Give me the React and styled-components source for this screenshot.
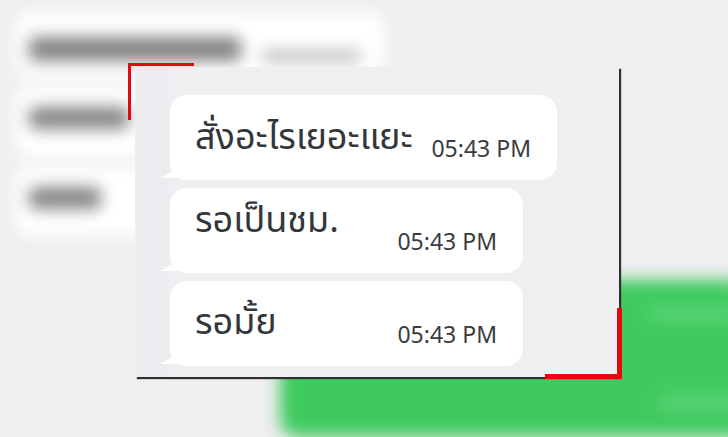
import styled, { createGlobalStyle } from 'styled-components';

const GlobalStyle = createGlobalStyle`
  html, body {
    margin: 0;
    padding: 0;
    background: #efeef0;
  }
  body {
    font-family: "Noto Sans Thai", "Noto Sans", "DejaVu Sans", sans-serif;
  }
`;

const Stage = styled.div`
  position: relative;
  width: 728px;
  height: 437px;
  overflow: hidden;
  background: #efeef0;
`;

/* blurred chat behind the zoomed panel */
const Backdrop = styled.div`
  display: flex;
  flex-direction: column;
  gap: 10px;
  padding: 12px 0 0 15px;
  height: 100%;
  box-sizing: border-box;
  filter: blur(8px);
`;

const GhostBubble = styled.div`
  display: flex;
  align-items: ${(p) => (p.$low ? 'flex-end' : 'center')};
  gap: 20px;
  width: ${(p) => p.$w}px;
  height: ${(p) => p.$h}px;
  padding: 0 14px 16px;
  box-sizing: border-box;
  background: #ffffff;
  border-radius: 14px;
`;

const GhostText = styled.div`
  width: ${(p) => p.$w}px;
  height: ${(p) => p.$h}px;
  margin-top: ${(p) => p.$top || 0}px;
  background: ${(p) => p.$c || '#858588'};
  border-radius: 6px;
`;

const GreenBubble = styled.div`
  align-self: flex-end;
  margin-top: 34px;
  margin-right: -20px;
  width: 468px;
  height: 180px;
  background: #3fca5f;
  border-radius: 18px;
  display: flex;
  flex-direction: column;
  align-items: flex-end;
  gap: 76px;
  padding: 26px 10px 0 0;
  box-sizing: border-box;
`;

const GreenStreak = styled.div`
  width: ${(p) => p.$w}px;
  height: 14px;
  background: #5cd477;
  border-radius: 7px;
`;

/* zoomed panel */
const Panel = styled.div`
  position: absolute;
  left: 135px;
  top: 67px;
  width: 484px;
  height: 310px;
  box-sizing: border-box;
  padding: 28px 0 0 35px;
  background: #efeef0;
  box-shadow: 2px 2px 1px #2f2f30;
  display: flex;
  flex-direction: column;
  gap: 8px;
  background-image: linear-gradient(90deg, #efeef0 0, #e9ecef 28px, #efeef0 36px);
`;

const Bubble = styled.div`
  position: relative;
  display: flex;
  align-items: flex-start;
  width: ${(p) => p.$w}px;
  height: 85px;
  box-sizing: border-box;
  padding: 0 26px 0 25px;
  background: #ffffff;
  border-radius: 17px;

  &::before {
    content: '';
    position: absolute;
    left: -10px;
    bottom: 2px;
    width: 22px;
    height: 12px;
    background: #ffffff;
    border-top-right-radius: 14px 12px;
    clip-path: polygon(0 100%, 100% 0, 100% 100%);
  }
`;

const MessageText = styled.span`
  flex: 1;
  margin-top: ${(p) => p.$top}px;
  font-size: 36px;
  line-height: 1;
  color: #33373b;
  white-space: nowrap;
`;

const Time = styled.span`
  align-self: flex-end;
  margin-bottom: 20px;
  font-family: "Noto Sans", "Open Sans", sans-serif;
  font-size: 23px;
  line-height: 1;
  color: #393c40;
  white-space: nowrap;
`;

const Bracket = styled.div`
  position: absolute;
  left: ${(p) => p.$x}px;
  top: ${(p) => p.$y}px;
  width: ${(p) => p.$w}px;
  height: ${(p) => p.$h}px;
  box-sizing: border-box;
  border: 0 solid #e5090f;
  ${(p) =>
    p.$corner === 'tl'
      ? `border-top-width: ${p.$t}px; border-left-width: ${p.$t}px;`
      : `border-bottom-width: ${p.$t}px; border-right-width: ${p.$t}px;`}
`;

const messages = [
  { text: 'สั่งอะไรเยอะแยะ', w: 387, top: 25 },
  { text: 'รอเป็นชม.', w: 353, top: 15 },
  { text: 'รอมั้ย', w: 353, top: 24 },
];

export default function App() {
  return (
    <>
      <GlobalStyle />
      <Stage>
        <Backdrop>
          <GhostBubble $w={370} $h={73} $low>
            <GhostText $w={212} $h={24} $c="#828285" />
            <GhostText $w={100} $h={10} $c="#b0b0b3" />
          </GhostBubble>
          <GhostBubble $w={300} $h={80}>
            <GhostText $w={100} $h={22} $top={8} />
          </GhostBubble>
          <GhostBubble $w={300} $h={78}>
            <GhostText $w={72} $h={22} $top={10} />
          </GhostBubble>
          <GreenBubble>
            <GreenStreak $w={90} />
            <GreenStreak $w={80} />
          </GreenBubble>
        </Backdrop>

        <Panel>
          {messages.map((m) => (
            <Bubble key={m.text} $w={m.w}>
              <MessageText $top={m.top}>{m.text}</MessageText>
              <Time>05:43 PM</Time>
            </Bubble>
          ))}
        </Panel>

        <Bracket $corner="tl" $x={128} $y={63} $w={66} $h={57} $t={3} />
        <Bracket $corner="br" $x={545} $y={308} $w={77} $h={71} $t={5} />
      </Stage>
    </>
  );
}
